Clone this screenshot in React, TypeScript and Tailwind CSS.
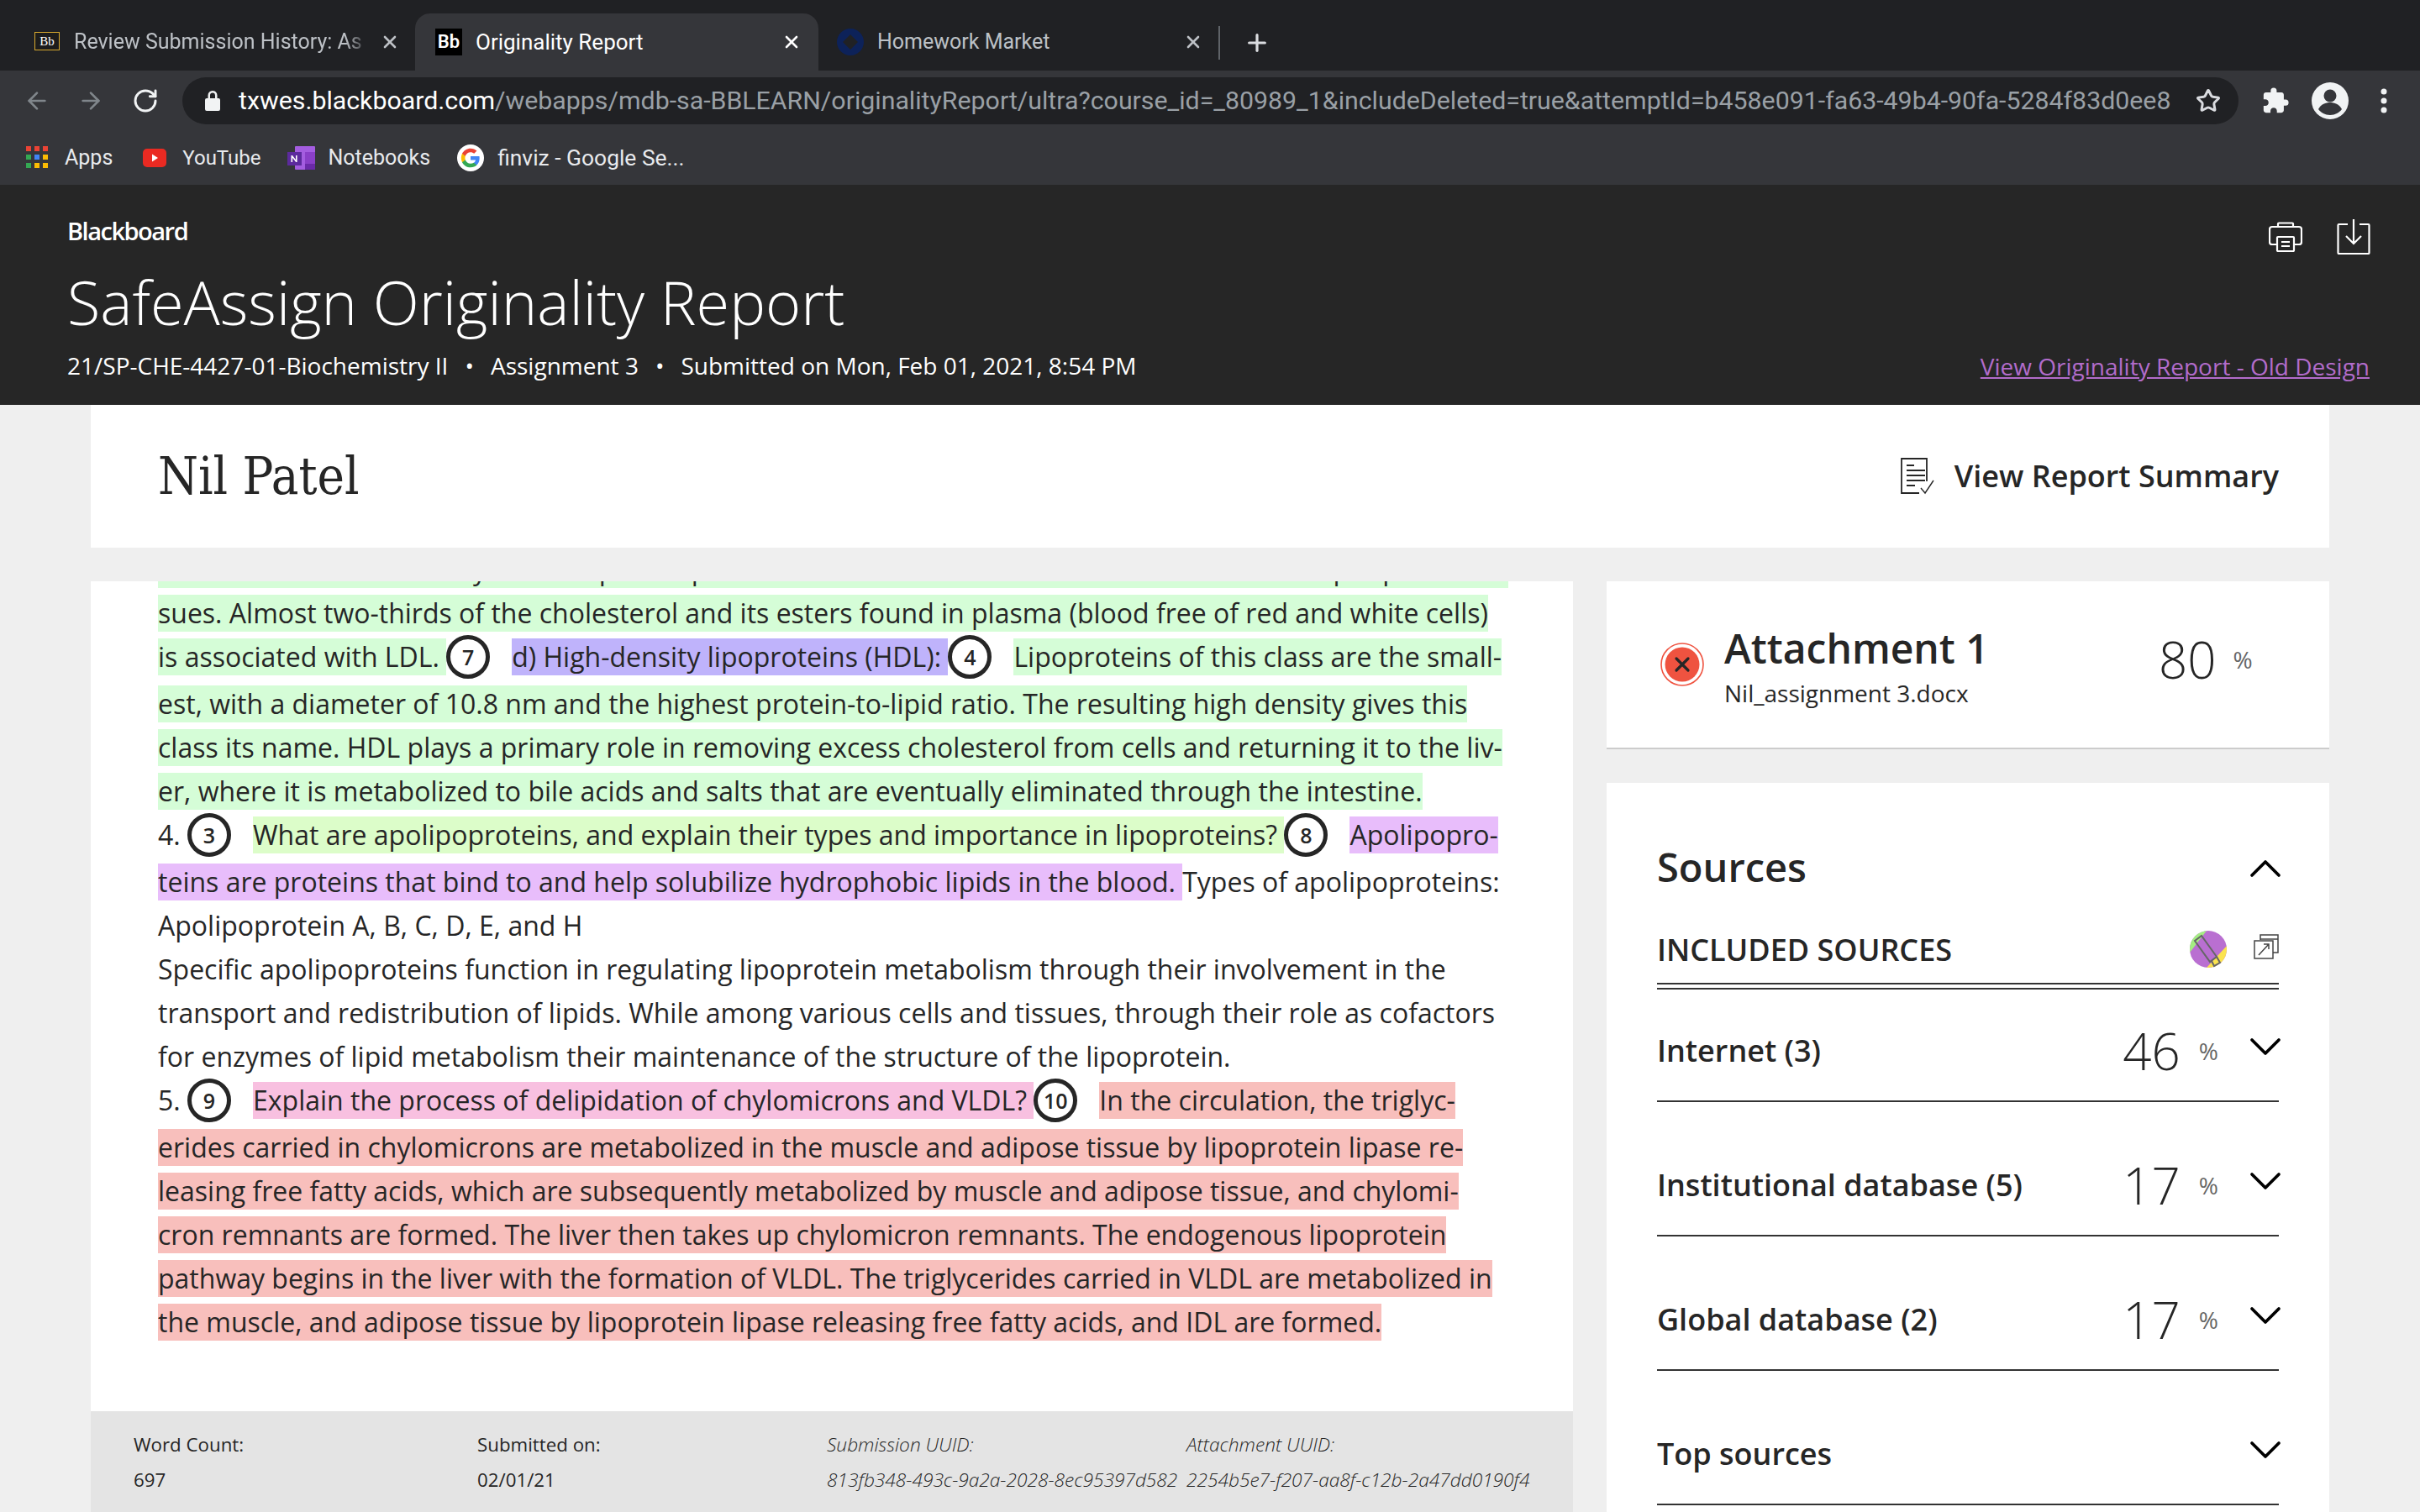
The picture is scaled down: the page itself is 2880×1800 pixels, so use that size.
import React from 'react';
import { ArrowLeft, ArrowRight, RotateCw, Star, X, Plus, ChevronDown, ChevronUp } from 'lucide-react';
import { MdExtension } from 'react-icons/md';

const CHROME_FONT = "font-['Roboto',sans-serif]";

function Tab({ width, active, icon, title, titleWidth, titleLeft, closeLeft }: {
  width: string; active?: boolean; icon: React.ReactNode; title: string; titleWidth: string; titleLeft: string; closeLeft: string;
}) {
  return (
    <div className={`relative h-[68px] shrink-0 rounded-t-[18px] ${width} ${active ? 'bg-[#35363a] text-white text-[26px]' : 'text-[#bdc1c6] text-[25px]'}`}>
      {icon}
      <div className={`absolute top-[16px] h-[36px] leading-[36px] whitespace-nowrap ${titleLeft} ${titleWidth}`}>{title}</div>
      <X className={`absolute top-[22px] w-[24px] h-[24px] ${closeLeft}`} strokeWidth={2.6} />
    </div>
  );
}

function AppsGrid() {
  const colors = ['#ea4335', '#ea4335', '#ea4335', '#34a853', '#4285f4', '#fbbc04', '#34a853', '#fbbc04', '#fbbc04'];
  return (
    <div className="grid grid-cols-3 gap-[4px] w-[26px] h-[26px]">
      {colors.map((c, i) => (
        <svg key={i} viewBox="0 0 6 6" className="w-[6px] h-[6px]"><rect width="6" height="6" fill={c} /></svg>
      ))}
    </div>
  );
}

function GoogleIcon() {
  return (
    <svg viewBox="0 0 48 48" className="w-[32px] h-[32px]">
      <circle cx="24" cy="24" r="24" fill="#fff" />
      <path fill="#4285f4" d="M40 24.5c0-1.2-.1-2.300-.3-3.500H24v6.600h9c-.4 2.100-1.600 3.900-3.400 5.100v4.200h5.500C38.300 33.900 40 29.600 40 24.500z" />
      <path fill="#34a853" d="M24 41c4.600 0 8.400-1.500 11.100-4.100l-5.500-4.200c-1.500 1-3.400 1.600-5.600 1.600-4.300 0-8-2.900-9.300-6.900H9v4.300C11.800 37.300 17.500 41 24 41z" />
      <path fill="#fbbc04" d="M14.700 27.400c-.7-2.100-.7-4.700 0-6.800v-4.300H9c-2.300 4.600-2.300 10.800 0 15.400l5.700-4.300z" />
      <path fill="#ea4335" d="M24 13.700c2.500 0 4.700.9 6.400 2.500l4.800-4.800C32.300 8.700 28.500 7 24 7 17.500 7 11.800 10.700 9 16.300l5.700 4.300c1.300-4 5-6.900 9.300-6.900z" />
    </svg>
  );
}

function BrowserChrome() {
  return (
    <div className={CHROME_FONT}>
      {/* tab strip */}
      <div className="h-[84px] bg-[#202124] flex items-end">
        <Tab
          width="w-[494px]"
          title="Review Submission History: As"
          titleLeft="left-[88px]"
          titleWidth="w-[351px] overflow-hidden [mask-image:linear-gradient(to_right,black_92%,transparent)]"
          closeLeft="left-[452px]"
          icon={
            <div className="absolute left-[41px] top-[22px] w-[30px] h-[22px] bg-[#1c1c1c] border border-[#d8a92e] text-white text-[15px] leading-[20px] text-center font-['Liberation_Serif',serif]">Bb</div>
          }
        />
        <Tab
          active
          width="w-[480px]"
          title="Originality Report"
          titleLeft="left-[72px]"
          titleWidth="w-[340px]"
          closeLeft="left-[436px]"
          icon={
            <div className="absolute left-[24px] top-[18px] w-[32px] h-[32px] bg-black text-white text-[22px] leading-[32px] text-center font-semibold">Bb</div>
          }
        />
        <Tab
          width="w-[476px]"
          title="Homework Market"
          titleLeft="left-[70px]"
          titleWidth="w-[340px]"
          closeLeft="left-[434px]"
          icon={
            <svg viewBox="0 0 32 32" className="absolute left-[22px] top-[18px] w-[32px] h-[32px]">
              <path fillRule="evenodd" fill="#0d2259" d="M16 0a16 16 0 1 0 0 32 16 16 0 0 0 0-32zm0 7l9 9-9 9-9-9z" />
            </svg>
          }
        />
        <div className="w-[2px] h-[40px] bg-[#5f6368] mb-[13px]" />
        <Plus className="w-[32px] h-[32px] ml-[28px] mb-[17px] text-[#dadce0]" strokeWidth={2.4} />
      </div>

      {/* toolbar */}
      <div className="h-[84px] bg-[#35363a] pt-[8px]">
        <div className="h-[56px] flex items-center">
          <ArrowLeft className="w-[32px] h-[32px] ml-[28px] text-[#80868b]" strokeWidth={2} />
          <ArrowRight className="w-[32px] h-[32px] ml-[32px] text-[#80868b]" strokeWidth={2} />
          <RotateCw className="w-[32px] h-[32px] ml-[33px] text-[#f1f3f4]" strokeWidth={2.2} />
          <div className="ml-[28px] w-[2447px] h-[56px] rounded-full bg-[#202124] flex items-center">
            <svg viewBox="0 0 18 24" className="ml-[27px] w-[18px] h-[24px]">
              <path fill="#f1f3f4" d="M9 0a5.500 5.500 0 0 0-5.500 5.500V9H2a2 2 0 0 0-2 2v11a2 2 0 0 0 2 2h14a2 2 0 0 0 2-2V11a2 2 0 0 0-2-2h-1.500V5.500A5.500 5.500 0 0 0 9 0zm0 2.500a3 3 0 0 1 3 3V9H6V5.500a3 3 0 0 1 3-3z" />
            </svg>
            <div className="ml-[22px] text-[30.3px] whitespace-nowrap text-[#9aa0a6]">
              <span className="text-white">txwes.blackboard.com</span>/webapps/mdb-sa-BBLEARN/originalityReport/ultra?course_id=_80989_1&amp;includeDeleted=true&amp;attemptId=b458e091-fa63-49b4-90fa-5284f83d0ee8
            </div>
            <Star className="ml-auto mr-[21px] w-[30px] h-[30px] text-[#dadce0]" strokeWidth={2.4} />
          </div>
          <MdExtension className="ml-[27px] w-[34px] h-[34px] text-[#f1f3f4]" />
          <svg viewBox="0 0 44 44" className="ml-[26px] w-[44px] h-[44px]">
            <circle cx="22" cy="22" r="22" fill="#f1f3f4" />
            <circle cx="22" cy="16" r="7.500" fill="#35363a" />
            <path fill="#35363a" d="M8 32c3-6 9-8 14-8s11 2 14 8c-3 4-8 7-14 7S11 36 8 32z" />
          </svg>
          <svg viewBox="0 0 8 30" className="ml-[38px] w-[8px] h-[30px]">
            <circle cx="4" cy="4" r="3.500" fill="#f1f3f4" /><circle cx="4" cy="15" r="3.500" fill="#f1f3f4" /><circle cx="4" cy="26" r="3.500" fill="#f1f3f4" />
          </svg>
        </div>
      </div>

      {/* bookmarks */}
      <div className="h-[52px] bg-[#35363a] flex items-start text-[25px] text-[#e8eaed] leading-[40px]">
        <div className="ml-[31px] mt-[6px]"><AppsGrid /></div>
        <span className="ml-[20px]">Apps</span>
        <svg viewBox="0 0 28 22" className="ml-[36px] mt-[9px] w-[28px] h-[22px]">
          <rect width="28" height="22" rx="5" fill="#ea2a22" /><path d="M11 6.500l7 4.500-7 4.500z" fill="#fff" />
        </svg>
        <span className="ml-[19px] text-[24px]">YouTube</span>
        <svg viewBox="0 0 33 28" className="ml-[31px] mt-[6px] w-[33px] h-[28px]">
          <rect x="9" width="24" height="28" rx="1" fill="#a45de0" />
          <rect x="21" y="7" width="12" height="14" fill="#8a3fc8" />
          <rect x="21" y="21" width="12" height="7" fill="#6a2aa8" />
          <rect y="7" width="17" height="16" fill="#5c2a9d" />
          <path d="M4.500 19v-8h1.500l4 5.200V11h1.600v8h-1.500l-4-5.200V19z" fill="#fff" />
        </svg>
        <span className="ml-[16px]">Notebooks</span>
        <div className="ml-[32px] mt-[4px]"><GoogleIcon /></div>
        <span className="ml-[16px] text-[26.4px]">finviz - Google Se...</span>
      </div>
    </div>
  );
}

function PrintIcon() {
  return (
    <svg viewBox="0 0 40 36" className="w-[40px] h-[36px]" fill="none" stroke="#fff" strokeWidth="2.200">
      <path d="M11 6V2.500a1 1 0 0 1 1-1h16a1 1 0 0 1 1 1V6" />
      <path d="M10 27H4a3 3 0 0 1-3-3V9a3 3 0 0 1 3-3h32a3 3 0 0 1 3 3v15a3 3 0 0 1-3 3h-6" />
      <rect x="10" y="18" width="20" height="17" rx="1" />
      <path d="M15 24h10M15 29h10" />
    </svg>
  );
}

function ExportIcon() {
  return (
    <svg viewBox="0 0 40 42" className="w-[40px] h-[42px]" fill="none" stroke="#fff" strokeWidth="2.200">
      <path d="M13 6H2.500a1 1 0 0 0-1 1v33a1 1 0 0 0 1 1h35a1 1 0 0 0 1-1V7a1 1 0 0 0-1-1H27" />
      <path d="M20 0v29M11 20l9 9 9-9" />
    </svg>
  );
}

function ReportIcon() {
  return (
    <svg viewBox="0 0 40 44" className="w-[40px] h-[44px]" fill="none" stroke="#262626" strokeWidth="1.800">
      <path d="M31 28V1H1v41h21" />
      <path d="M7 9h9M7 15h22M7 21h22M7 27h22M7 33h10" />
      <path d="M24 36l5 6 10-15" strokeWidth="1.400" />
    </svg>
  );
}

function Circle({ n, className = '' }: { n: number; className?: string }) {
  return (
    <span className={`w-[52px] h-[52px] shrink-0 rounded-full border-[5px] border-[#262626] bg-white flex items-center justify-center text-[25px] font-semibold ${className}`}>
      {n}
    </span>
  );
}

function Line({ children, tall }: { children: React.ReactNode; tall?: boolean }) {
  return (
    <div className={`flex items-center h-[44px] leading-[44px] whitespace-pre ${tall ? 'mb-[12px]' : 'mb-[8px]'}`}>{children}</div>
  );
}

const green = 'bg-[#d5fdd7]';
const violet = 'bg-[#bfb3fb]';
const lime = 'bg-[#dcfdc9]';
const lilac = 'bg-[#e8bdfb]';
const pink = 'bg-[#f8c0e0]';
const salmon = 'bg-[#f8bfbc]';

function ReportText() {
  return (
    <div className="-mt-[36px] pl-[80px] text-[32px] text-[#262626] font-['Open_Sans',sans-serif]">
      <Line><span className={green}>LDL are the main and only fat transport of plasma cholesterol to the cells of other tissues and peripheral tis-</span></Line>
      <Line><span className={green}>sues. Almost two-thirds of the cholesterol and its esters found in plasma (blood free of red and white cells)</span></Line>
      <Line tall>
        <span className={green}>is associated with LDL. </span>
        <Circle n={7} />
        <span className={`${violet} ml-[26px]`}>d) High-density lipoproteins (HDL): </span>
        <Circle n={4} />
        <span className={`${green} ml-[26px]`}>Lipoproteins of this class are the small-</span>
      </Line>
      <Line><span className={green}>est, with a diameter of 10.8 nm and the highest protein-to-lipid ratio. The resulting high density gives this</span></Line>
      <Line><span className={green}>class its name. HDL plays a primary role in removing excess cholesterol from cells and returning it to the liv-</span></Line>
      <Line><span className={green}>er, where it is metabolized to bile acids and salts that are eventually eliminated through the intestine.</span></Line>
      <Line tall>
        <span>4. </span>
        <Circle n={3} />
        <span className={`${lime} ml-[26px]`}>What are apolipoproteins, and explain their types and importance in lipoproteins? </span>
        <Circle n={8} />
        <span className={`${lilac} ml-[26px]`}>Apolipopro-</span>
      </Line>
      <Line><span className={lilac}>teins are proteins that bind to and help solubilize hydrophobic lipids in the blood. </span><span>Types of apolipoproteins:</span></Line>
      <Line>Apolipoprotein A, B, C, D, E, and H</Line>
      <Line>Specific apolipoproteins function in regulating lipoprotein metabolism through their involvement in the</Line>
      <Line>transport and redistribution of lipids. While among various cells and tissues, through their role as cofactors</Line>
      <Line>for enzymes of lipid metabolism their maintenance of the structure of the lipoprotein.</Line>
      <Line tall>
        <span>5. </span>
        <Circle n={9} />
        <span className={`${pink} ml-[26px]`}>Explain the process of delipidation of chylomicrons and VLDL? </span>
        <Circle n={10} />
        <span className={`${salmon} ml-[26px]`}>In the circulation, the triglyc-</span>
      </Line>
      <Line><span className={salmon}>erides carried in chylomicrons are metabolized in the muscle and adipose tissue by lipoprotein lipase re-</span></Line>
      <Line><span className={salmon}>leasing free fatty acids, which are subsequently metabolized by muscle and adipose tissue, and chylomi-</span></Line>
      <Line><span className={salmon}>cron remnants are formed. The liver then takes up chylomicron remnants. The endogenous lipoprotein</span></Line>
      <Line><span className={salmon}>pathway begins in the liver with the formation of VLDL. The triglycerides carried in VLDL are metabolized in</span></Line>
      <Line><span className={salmon}>the muscle, and adipose tissue by lipoprotein lipase releasing free fatty acids, and IDL are formed.</span></Line>
    </div>
  );
}

function FooterCell({ width, label, value, italic }: { width: string; label: string; value: string; italic?: boolean }) {
  return (
    <div className={`${width} shrink-0 whitespace-nowrap ${italic ? 'italic font-light text-[22.700px]' : ''}`}>
      <div className="h-[42px] leading-[42px]">{label}</div>
      <div className="h-[42px] leading-[42px]">{value}</div>
    </div>
  );
}

function SourceRow({ name, value, first }: { name: string; value?: number; first?: boolean }) {
  return (
    <div className={`flex items-center border-b-2 border-[#333] ${first ? 'h-[134px] pt-[14px]' : 'h-[160px] pt-[40px]'}`}>
      <span className="text-[36px] font-semibold text-[#262626]">{name}</span>
      {value !== undefined && (
        <>
          <span className="ml-auto text-[60px] font-light leading-[60px] text-[#262626]">{value}</span>
          <span className="ml-[22px] text-[28px] text-[#666]">%</span>
        </>
      )}
      <ChevronDown className={`${value !== undefined ? 'ml-[24px]' : 'ml-auto'} -mr-[16px] -mt-[10px] w-[64px] h-[64px] shrink-0 text-black`} strokeWidth={1.4} />
    </div>
  );
}

function HighlightIcon() {
  return (
    <svg viewBox="0 0 44 44" className="w-[44px] h-[44px]">
      <defs>
        <clipPath id="hl-round"><circle cx="22" cy="22" r="22" /></clipPath>
      </defs>
      <g clipPath="url(#hl-round)">
        <rect width="44" height="44" fill="#b96fd1" />
        <path d="M0 0h20L0 26z" fill="#a4ee82" />
        <path d="M44 18v26H20z" fill="#fbe34e" />
      </g>
      <g fill="none" stroke="#666" strokeWidth="2">
        <path d="M6 12l8-6 18 25-8 6z" />
        <path d="M26 36l3 6 7-4-4-7" />
      </g>
    </svg>
  );
}

function OpenIcon() {
  return (
    <svg viewBox="0 0 30 30" className="w-[30px] h-[30px]" fill="none" stroke="#444" strokeWidth="1.500">
      <path d="M8 7V1h21v21h-6M8 6h21" />
      <rect x="1" y="8" width="22" height="21" />
      <path d="M6 25L18 12M12 12h6v6" />
    </svg>
  );
}

function SidePanel() {
  return (
    <div className="w-[860px] shrink-0 flex flex-col gap-[40px] text-[#262626]">
      <div className="h-[200px] bg-white border-b-2 border-[#ccc] flex items-center pl-[64px]">
        <svg viewBox="0 0 52 52" className="w-[52px] h-[52px] shrink-0">
          <circle cx="26" cy="26" r="25" fill="#fff" stroke="#ef5340" strokeWidth="1.600" />
          <circle cx="26" cy="26" r="20.500" fill="#ef5340" />
          <path d="M19 19l14 14M33 19L19 33" stroke="#262626" strokeWidth="3.200" strokeLinecap="round" />
        </svg>
        <div className="ml-[24px] w-[517px] mt-[7px]">
          <div className="text-[48px] leading-[60px] font-semibold">Attachment 1</div>
          <div className="text-[28px] leading-[46px]">Nil_assignment 3.docx</div>
        </div>
        <div className="flex items-center -mt-[12px]">
          <span className="text-[60px] font-light leading-[70px]">80</span>
          <span className="ml-[20px] text-[28px] text-[#666]">%</span>
        </div>
      </div>

      <div className="flex-1 bg-white px-[60px] pt-[70px]">
        <div className="flex items-center justify-between h-[60px]">
          <span className="text-[47px] font-semibold">Sources</span>
          <ChevronUp className="w-[64px] h-[64px] -mr-[16px] mt-[4px] text-black" strokeWidth={1.4} />
        </div>
        <div className="flex items-center h-[60px] mt-[39px]">
          <span className="text-[36px] font-semibold">INCLUDED SOURCES</span>
          <div className="ml-auto -mt-[2px]"><HighlightIcon /></div>
          <div className="ml-[32px] -mt-[8px]"><OpenIcon /></div>
        </div>
        <div className="mt-[9px] h-[8px] border-y-2 border-[#333]" />
        <SourceRow first name="Internet (3)" value={46} />
        <SourceRow name="Institutional database (5)" value={17} />
        <SourceRow name="Global database (2)" value={17} />
        <SourceRow name="Top sources" />
      </div>
    </div>
  );
}

export default function App() {
  return (
    <div className="w-[2880px] h-[1800px] overflow-hidden flex flex-col bg-[#efefef] font-['Open_Sans',sans-serif]">
      <BrowserChrome />

      {/* Blackboard header */}
      <header className="h-[262px] shrink-0 bg-[#262626] text-white px-[80px] relative">
        <div className="pt-[36px] text-[29px] leading-[38px] font-semibold tracking-[-1.500px]">Blackboard</div>
        <h1 className="mt-[19px] text-[72px] leading-[92px] font-light">SafeAssign Originality Report</h1>
        <div className="mt-[9px] flex items-center justify-between text-[28px] leading-[40px]">
          <span className="whitespace-nowrap">
            21/SP-CHE-4427-01-Biochemistry II<span className="mx-[20px]">•</span>Assignment 3<span className="mx-[20px]">•</span>Submitted on Mon, Feb 01, 2021, 8:54 PM
          </span>
          <a className="text-[#b26ccb] underline -mr-[20px] mt-[2px]">View Originality Report - Old Design</a>
        </div>
        <div className="absolute right-[59px] top-[41px] flex items-center gap-[41px]">
          <PrintIcon />
          <ExportIcon />
        </div>
      </header>

      <div className="flex-1 min-h-0 px-[108px] flex flex-col gap-[40px]">
        {/* student name */}
        <div className="h-[170px] shrink-0 bg-white pl-[80px] pr-[60px] flex items-center justify-between text-[#262626]">
          <h2 className="text-[61px] font-['DejaVu_Serif_Condensed','DejaVu_Serif',serif]">Nil Patel</h2>
          <div className="flex items-center gap-[24px]">
            <ReportIcon />
            <span className="text-[36px] font-semibold">View Report Summary</span>
          </div>
        </div>

        <div className="flex-1 min-h-0 flex gap-[40px]">
          <div className="w-[1764px] shrink-0 flex flex-col bg-white">
            <div className="flex-1 min-h-0 overflow-hidden"><ReportText /></div>
            <div className="h-[120px] shrink-0 bg-[#e4e4e4] pl-[51px] pt-[19px] flex text-[22.300px] text-[#262626]">
              <FooterCell width="w-[409px]" label="Word Count:" value="697" />
              <FooterCell width="w-[416px]" label="Submitted on:" value="02/01/21" />
              <FooterCell italic width="w-[428px]" label="Submission UUID:" value="813fb348-493c-9a2a-2028-8ec95397d582" />
              <FooterCell italic width="w-[420px]" label="Attachment UUID:" value="2254b5e7-f207-aa8f-c12b-2a47dd0190f4" />
            </div>
          </div>
          <SidePanel />
        </div>
      </div>
    </div>
  );
}
